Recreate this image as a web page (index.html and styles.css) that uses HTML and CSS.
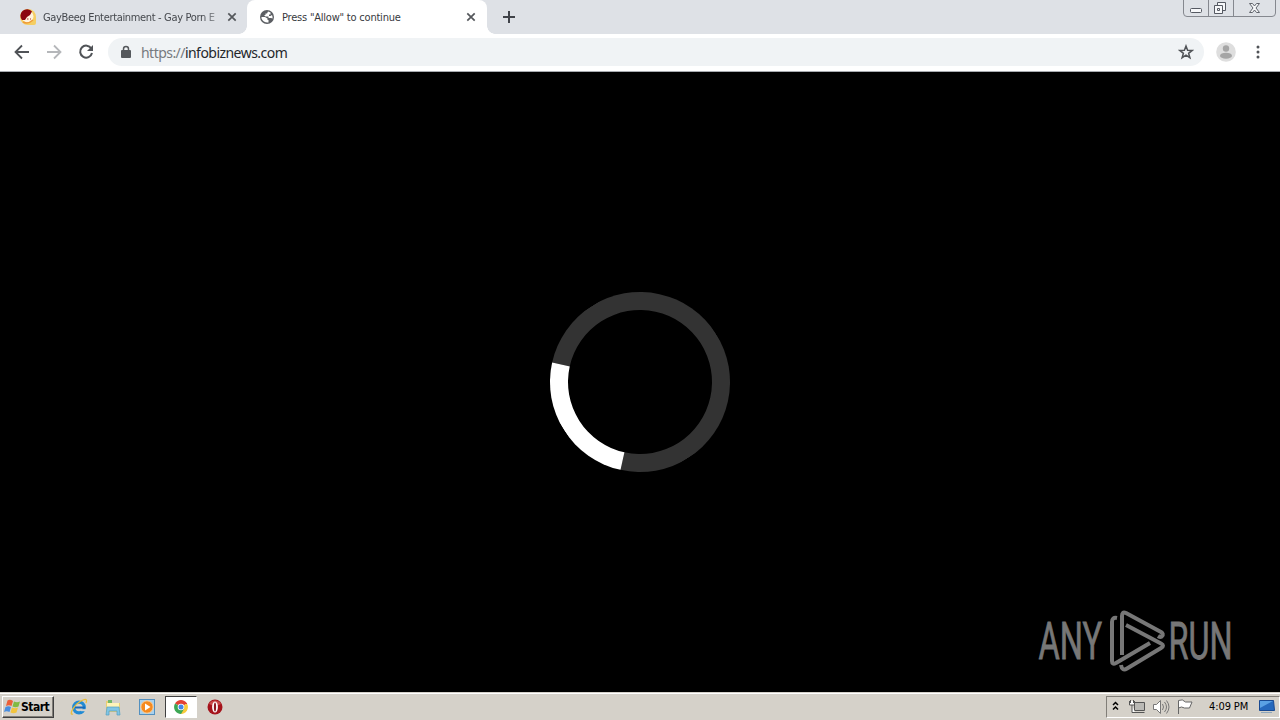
FILE: index.html
```html
<!DOCTYPE html>
<html lang="en">
<head>
  <meta charset="UTF-8">
  <title>Press "Allow" to continue</title>
  <link rel="stylesheet" href="styles.css">
</head>
<body>
  <header class="tab-strip">
    <div class="tab">
      <svg class="favicon" width="16" height="16" viewBox="0 0 16 16">
        <path d="M8 0a8 8 0 0 1 8 8v6q0 2-2 2H8A8 8 0 0 1 8 0z" fill="#f5ce62"/>
        <circle cx="7.500" cy="7.500" r="6" fill="#fff3dd"/>
        <path d="M2 11A6.500 6.500 0 0 1 12 2.500L10 6 7 8 5 11z" fill="#8c0710"/>
        <path d="M3 13Q8 15.500 13 11" fill="none" stroke="#ef9b38" stroke-width="1.500"/>
        <path d="M7 10h1.500M10 10h1" stroke="#a33"/>
      </svg>
      <span class="tab-title first-title">GayBeeg Entertainment - Gay Porn E</span>
      <svg class="close" width="10" height="10" viewBox="0 0 10 10"><path d="M1.300 1.300l7.400 7.400M8.700 1.300L1.300 8.700" stroke="#54575b" stroke-width="1.700"/></svg>
    </div>
    <div class="tab active">
      <svg class="favicon globe" width="16" height="16" viewBox="0 0 16 16">
        <circle cx="8" cy="8" r="7" fill="#5b5e63"/>
        <path d="M2.500 8h3.500l2.500 1.500v1.500h1v2.500Q4.500 14 2.500 9.500zM9 2.500L8 4.500H6.500V6H5l1.500 1.500h3v1.500h2.500l1.500.5Q14 8.500 13 6L11.500 7H10V5.500h1.500V3.500z" fill="#fff"/>
      </svg>
      <span class="tab-title second-title">Press "Allow" to continue</span>
      <svg class="close" width="10" height="10" viewBox="0 0 10 10"><path d="M1.300 1.300l7.400 7.400M8.700 1.300L1.300 8.700" stroke="#54575b" stroke-width="1.700"/></svg>
    </div>
    <svg class="new-tab" width="12" height="12" viewBox="0 0 12 12"><path d="M6 0v12M0 6h12" stroke="#404349" stroke-width="2"/></svg>
    <svg class="window-buttons" width="94" height="18" viewBox="0 0 94 18">
      <path d="M.5 0v13q0 3.500 3.500 3.500h85q3.500 0 3.500-3.500V0M25.500 0v16.500M50.500 0v16.500" fill="none" stroke="#85888f"/>
      <rect x="7.500" y="8.500" width="11" height="4" rx="1" fill="#f6f7f9" stroke="#555962"/>
      <path d="M34.500 2.500h8v8h-8z" fill="#f6f7f9" stroke="#555962"/>
      <path d="M31.500 5.500h8v8h-8zM34.500 8.500h2v2h-2z" fill="#f6f7f9" stroke="#555962"/>
      <path d="M66.500 3.500h3l2 2.500 2-2.500h3l-3.500 4.500 3.500 4.500h-3l-2-2.500-2 2.500h-3L70 8z" fill="#f6f7f9" stroke="#60646c"/>
    </svg>
  </header>

  <nav class="toolbar">
    <svg class="nav-icons" width="108" height="36" viewBox="0 0 108 36" fill="none" stroke-width="1.800">
      <path d="M29 18H16M22 11.500L15.500 18l6.500 6.500" stroke="#505357"/>
      <path d="M47 18h13M54 11.500l6.500 6.500-6.500 6.500" stroke="#b5b7ba"/>
      <path d="M91.300 14.500A6 6 0 1 0 92 19" stroke="#505357" stroke-width="2"/>
      <path d="M93 11v6h-6z" fill="#505357"/>
    </svg>
    <div class="address-bar">
      <svg width="10" height="14" viewBox="0 0 10 14"><path d="M2.500 6V4a2.500 2.500 0 0 1 5 0v2" fill="none" stroke="#55585c" stroke-width="1.500"/><rect y="5" width="10" height="8" rx="1" fill="#55585c"/></svg>
      <span class="url"><span class="scheme">https://</span>infobiznews.com</span>
      <svg class="star" width="16" height="16" viewBox="0 0 16 16"><path d="M8 2l1.600 4.200 4.600.2-3.600 2.900 1.300 4.400L8 11.200l-3.900 2.500 1.300-4.400-3.600-2.900 4.600-.2z" fill="none" stroke="#505357" stroke-width="1.500"/></svg>
    </div>
    <svg class="profile" width="20" height="20" viewBox="0 0 20 20"><circle cx="10" cy="10" r="9.800" fill="#dedede"/><circle cx="10" cy="6.500" r="3.200" fill="#a5a5a5"/><ellipse cx="10" cy="13.700" rx="6" ry="3" fill="#a5a5a5"/></svg>
    <svg class="menu" width="4" height="14" viewBox="0 0 4 14" fill="#505357"><circle cx="2" cy="2" r="1.500"/><circle cx="2" cy="7" r="1.500"/><circle cx="2" cy="12" r="1.500"/></svg>
  </nav>

  <main class="page">
    <div class="spinner"></div>
    <svg class="watermark" width="210" height="70" viewBox="1035 605 210 70">
      <g class="watermark-text">
        <text x="1038.500" y="659" textLength="63.500" lengthAdjust="spacingAndGlyphs">ANY</text>
        <text x="1168.500" y="659" textLength="64" lengthAdjust="spacingAndGlyphs">RUN</text>
      </g>
      <g fill="none" stroke="#777" stroke-width="4" stroke-linejoin="round">
        <path d="M1117 618q-5-1-5 4v39q0 4 4 2l34-20"/>
        <path d="M1122 655v-39q0-5 4-3l35 19q3 2 1 4-1 2-4 0"/>
        <path d="M1126 625l35 18.500q4 2 0 4.500l-34 20.500q-5 3-6-3.500"/>
      </g>
    </svg>
  </main>

  <footer class="taskbar">
    <div class="start">
      <svg width="17" height="16" viewBox="0 0 17 16">
        <path d="M3.500 1.500Q6 0 9 2L7.500 7Q5 5.500 2 7z" fill="#ec6039"/>
        <path d="M10 2.500q3 1.500 6 0L14.500 7.500q-3 1.500-6 0z" fill="#80ba43"/>
        <path d="M1.500 8q3-1.500 5.500 0l-1.500 5q-3-1.500-5.500 0z" fill="#498ee0"/>
        <path d="M8 8.500q3 1.500 6 0L12.500 13.500q-3 1.500-6 0z" fill="#f2c43e"/>
      </svg>
      <span>Start</span>
    </div>
    <div class="launchers">
      <div class="launcher">
        <svg width="18" height="18" viewBox="0 0 18 18">
          <circle cx="9" cy="9.500" r="5.300" fill="none" stroke="#218bd4" stroke-width="3.200"/>
          <path d="M5 9.500h10" stroke="#1769bb" stroke-width="2"/>
          <path d="M11 11.200h6v2h-6z" fill="#d6d3ce"/>
          <path d="M3 16Q0 17 2 12.500 6 5 13 2q5-2 3 3" fill="none" stroke="#e9bd3a" stroke-width="1.300"/>
        </svg>
      </div>
      <div class="launcher">
        <svg width="18" height="18" viewBox="0 0 18 18">
          <path d="M2 3h5l1.500 2H16v9H2z" fill="#e9ce73"/>
          <path d="M3 5h12v7H3z" fill="#fff4b9"/>
          <path d="M4 2h4v3H4z" fill="#73b768"/>
          <path d="M3 9h12l1 8h-3v-4H5v4H2z" fill="#80c5e5" stroke="#539fc2" stroke-width=".7"/>
        </svg>
      </div>
      <div class="launcher">
        <svg width="18" height="18" viewBox="0 0 18 18">
          <rect x="1.500" y="1.500" width="15" height="15" fill="#a8d1ee" stroke="#5390bf"/>
          <circle cx="9" cy="9" r="6.200" fill="#f58a1f" stroke="#fbd2a0"/>
          <path d="M7 5.500v7l5.500-3.500z" fill="#fff"/>
        </svg>
      </div>
      <div class="launcher pressed">
        <svg width="14" height="14" viewBox="0 0 14 14">
          <path d="M7 7L1 3.500A7 7 0 0 1 13 3.500z" fill="#e34134"/>
          <path d="M7 7l6-3.500A7 7 0 0 1 7 14l-2-4z" fill="#f8ca3b"/>
          <path d="M1 3.500A7 7 0 0 0 7 14l3-5-3-2z" fill="#3da754"/>
          <path d="M7 3.500h6" stroke="#e34134"/>
          <circle cx="7" cy="7" r="3.300" fill="#fff"/>
          <circle cx="7" cy="7" r="2.500" fill="#4386e8"/>
        </svg>
      </div>
      <div class="launcher">
        <svg width="16" height="16" viewBox="0 0 16 16"><circle cx="8" cy="8" r="7.500" fill="#a5131b"/><path d="M2 5a7 7 0 0 1 12 0Q8 8 2 5z" fill="#ca4b4b"/><ellipse cx="8" cy="8" rx="2.900" ry="5.500" fill="#fff"/><ellipse cx="8" cy="8" rx="1.100" ry="4.600" fill="#8d1720"/></svg>
      </div>
    </div>
    <div class="tray">
      <svg width="90" height="18" viewBox="0 0 90 18" fill="none">
        <path d="M6 7l2.500-2.500L11 7M6 11.500L8.500 9l2.500 2.500" stroke="#000" stroke-width="1.500"/>
        <path d="M27.500 4.500h10v8h-10zM25.500 14.500h12" fill="#bab9b5" stroke="#555"/>
        <path d="M22.500 3v4h5V3M23.500 2v3M26.500 2v3M25 7v7.500h3" fill="#fff" stroke="#555"/>
        <path d="M46.500 6.500h3l4-4v13l-4-4h-3z" fill="#fff" stroke="#777"/>
        <path d="M55.500 6q2 3 0 6M57.500 4q4 5 0 10M59.500 2.500q5 6.500 0 13" stroke="#777"/>
        <path d="M71.500 16V2.500q4-2 7 1.500h6.500l-2.500 6h-5q-3-2-6 0" fill="#fff" stroke="#666"/>
      </svg>
      <time class="clock">4:09 PM</time>
      <svg class="desktop" width="16" height="14" viewBox="0 0 16 14"><path d="M.5.500h14l1 10H.5z" fill="#2669bd" stroke="#194a92"/><path d="M1 1h13L1 8z" fill="#5aa1e4"/><path d="M2 12.500h11" stroke="#8fa6bb"/></svg>
    </div>
  </footer>
</body>
</html>
```
FILE: styles.css
```css
* {
  box-sizing: border-box;
}

body {
  display: flex;
  flex-direction: column;
  width: 1280px;
  height: 720px;
  margin: 0;
  overflow: hidden;
  font-family: "DejaVu Sans Condensed", "DejaVu Sans", sans-serif;
  font-size: 11px;
  background: #000;
}

svg {
  display: block;
  flex-shrink: 0;
}

.tab-strip {
  display: flex;
  height: 34px;
  background: #dee1e6;
}

.tab {
  display: flex;
  align-items: center;
  width: 247px;
  height: 34px;
  padding: 0 10px 0 20px;
  color: #45484d;
}

.tab.active {
  position: relative;
  width: 240px;
  padding: 0 11px 0 12px;
  border-radius: 8px 8px 0 0;
  background: #fff;
  color: #37393d;
}

.tab.active::before,
.tab.active::after {
  content: "";
  position: absolute;
  bottom: 0;
  width: 8px;
  height: 8px;
}

.tab.active::before {
  left: -8px;
  background: radial-gradient(circle at 0 0, #dee1e6 7.5px, #fff 8px);
}

.tab.active::after {
  right: -8px;
  background: radial-gradient(circle at 100% 0, #dee1e6 7.5px, #fff 8px);
}

.tab-title {
  margin-left: 7px;
  white-space: nowrap;
  letter-spacing: -0.21px;
}

.first-title {
  width: 178px;
  letter-spacing: -0.34px;
  -webkit-mask-image: linear-gradient(to right, #000 160px, transparent 182px);
}

.second-title {
  margin-left: 8px;
}

.globe {
  margin-right: -1px;
}

.close {
  margin-left: auto;
}

.new-tab {
  margin: 11px 0 0 16px;
}

.window-buttons {
  margin-left: auto;
  margin-right: 3px;
}

.toolbar {
  display: flex;
  align-items: center;
  height: 38px;
  padding-bottom: 1px;
  background: #fff;
  border-bottom: 1px solid #a8abb0;
}

.address-bar {
  display: flex;
  align-items: center;
  width: 1096px;
  height: 28px;
  padding: 0 10px 0 13px;
  border-radius: 14px;
  background: #f0f3f5;
}

.url {
  margin-left: 10px;
  font-family: "Noto Sans", sans-serif;
  font-size: 14px;
  letter-spacing: -0.54px;
  color: #24272b;
}

.scheme {
  color: #777a7f;
}

.star {
  margin-left: auto;
}

.profile {
  margin-left: 12px;
}

.menu {
  margin-left: 20px;
}

.page {
  display: flex;
  align-items: center;
  justify-content: center;
  position: relative;
  height: 620px;
  background: #000;
}

.spinner {
  width: 180px;
  height: 180px;
  border: 18px solid #333;
  border-left-color: #fff;
  border-radius: 50%;
  transform: rotate(-32.5deg);
}

.watermark {
  position: absolute;
  right: 35px;
  bottom: 17px;
}

.watermark-text {
  fill: #777;
  stroke: #777;
  stroke-width: 0.8px;
  font-family: Roboto, sans-serif;
  font-size: 51px;
}

.taskbar {
  display: flex;
  align-items: center;
  height: 28px;
  padding: 1px 0 1px 2px;
  background: #d5d1c9;
  border-top: 1px solid #d5d1c9;
  box-shadow: inset 0 1px #fff;
}

.start {
  display: flex;
  align-items: center;
  width: 52px;
  height: 22px;
  padding-left: 1px;
  border: 1px solid;
  border-color: #fff #404040 #404040 #fff;
  box-shadow: inset -1px -1px #817e78;
  font-weight: bold;
  font-size: 12px;
  color: #000;
}

.start span {
  letter-spacing: -0.5px;
}

.launchers {
  display: flex;
  gap: 2px;
  margin-left: 9px;
}

.launcher {
  display: flex;
  align-items: center;
  justify-content: center;
  width: 32px;
  height: 22px;
}

.pressed {
  border: 1px solid;
  border-color: #404040 #fff #fff #404040;
  background: #fff;
}

.tray {
  display: flex;
  align-items: center;
  width: 174px;
  height: 22px;
  margin-left: auto;
  border: 1px solid;
  border-color: #817e78 #fff #fff #817e78;
}

.clock {
  margin-left: 12px;
  white-space: nowrap;
  letter-spacing: -0.1px;
  color: #000;
}

.desktop {
  margin-left: auto;
  margin-right: 4px;
}
```
